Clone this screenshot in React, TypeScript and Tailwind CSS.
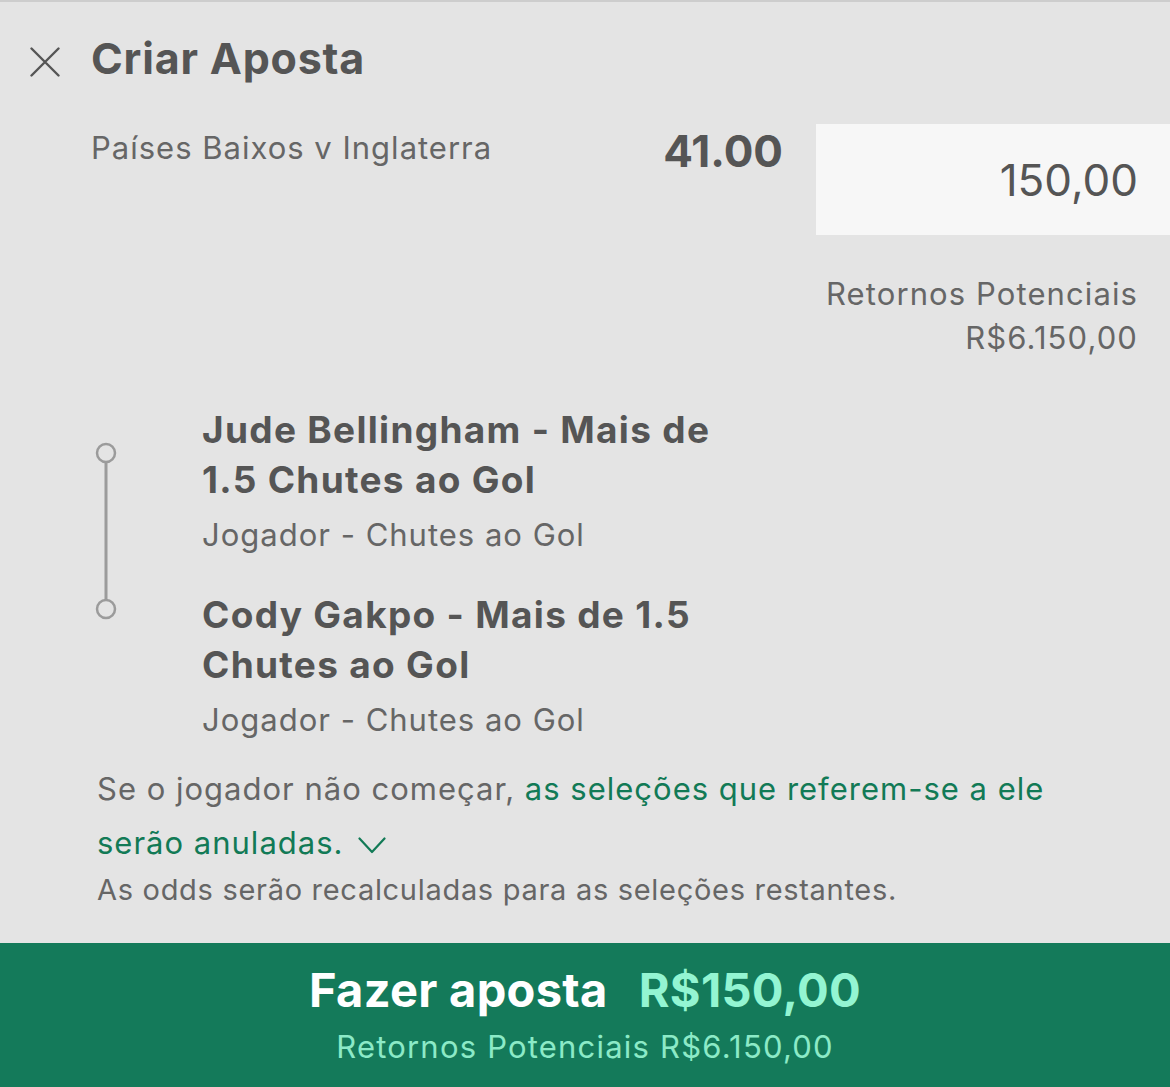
import React from "react";

const legs = [
  {
    title: ["Jude Bellingham - Mais de", "1.5 Chutes ao Gol"],
    market: "Jogador - Chutes ao Gol",
  },
  {
    title: ["Cody Gakpo - Mais de 1.5", "Chutes ao Gol"],
    market: "Jogador - Chutes ao Gol",
  },
];

function CloseIcon() {
  return (
    <svg width="30" height="30" viewBox="0 0 30 30" fill="none">
      <path d="M1.5 1.5 L28.5 28.5 M28.5 1.5 L1.5 28.5" stroke="#555555" strokeWidth="2.4" strokeLinecap="round" />
    </svg>
  );
}

function Connector() {
  return (
    <svg width="22" height="178" viewBox="0 0 22 178" fill="none">
      <line x1="11" y1="20" x2="11" y2="158" stroke="#9b9b9b" strokeWidth="3" />
      <circle cx="11" cy="11" r="9" stroke="#9b9b9b" strokeWidth="2.5" fill="#e4e4e4" />
      <circle cx="11" cy="167" r="9" stroke="#9b9b9b" strokeWidth="2.5" fill="#e4e4e4" />
    </svg>
  );
}

function Chevron() {
  return (
    <svg width="28" height="17" viewBox="0 0 28 17" fill="none" className="inline-block align-baseline">
      <path d="M1.5 1.5 L14 15 L26.5 1.5" stroke="#127a56" strokeWidth="2.2" strokeLinecap="round" strokeLinejoin="round" />
    </svg>
  );
}

export default function App() {
  return (
    <div
      className="w-[1170px] h-[1087px] bg-[#e4e4e4] border-t-2 border-[#cdcdcd] flex flex-col text-[#555555] overflow-hidden"
      style={{ fontFamily: "Inter, 'Noto Sans', sans-serif" }}
    >
      {/* cabeçalho */}
      <div className="flex items-start pt-[30px]">
        <div className="ml-[30px] mt-[15px]">
          <CloseIcon />
        </div>
        <h1 className="ml-[31px] text-[43px] leading-[52px] font-bold tracking-[0.8px]">Criar Aposta</h1>
      </div>

      {/* evento, odd e valor */}
      <div className="flex items-start mt-[40px]">
        <div className="flex-1 flex justify-between pl-[91px] pr-[33px]">
          <div className="mt-[4px] text-[31px] leading-[40px] tracking-[1px] text-[#666666]">Países Baixos v Inglaterra</div>
          <div className="mt-[1px] text-[44px] leading-[52px] font-bold">41.00</div>
        </div>
        <div className="w-[354px] h-[111px] bg-[#f7f7f7] flex items-center justify-end pr-[32px] text-[44px] leading-[52px] text-[#555555]">
          150,00
        </div>
      </div>

      <div className="mt-[37px] pr-[32px] text-right text-[31px] leading-[44px] tracking-[1.1px] text-[#666666]">
        <div>Retornos Potenciais</div>
        <div>R$6.150,00</div>
      </div>

      {/* seleções */}
      <div className="flex mt-[45px]">
        <div className="w-[202px] shrink-0 pl-[95px] pt-[37px]">
          <Connector />
        </div>
        <div className="flex flex-col">
          {legs.map((leg, i) => (
            <div key={i} className={i > 0 ? "mt-[33px]" : ""}>
              <div className="text-[37px] leading-[50px] font-bold tracking-[1.3px]">
                {leg.title.map((l) => (
                  <div key={l}>{l}</div>
                ))}
              </div>
              <div className="mt-[8px] text-[31px] leading-[44px] tracking-[1px] text-[#666666]">{leg.market}</div>
            </div>
          ))}
        </div>
      </div>

      {/* aviso */}
      <div className="mt-[20px] pl-[97px] pr-[20px]">
        <div className="text-[31px] leading-[54px] tracking-[1px] text-[#666666]">
          Se o jogador não começar, <span className="text-[#127a56]">as seleções que referem-se a ele</span>
          <br />
          <span className="text-[#127a56]">serão anuladas.</span>
          <span className="ml-[15px]">
            <Chevron />
          </span>
        </div>
        <div className="text-[29px] leading-[40px] tracking-[0.7px] text-[#666666]">
          As odds serão recalculadas para as seleções restantes.
        </div>
      </div>

      {/* botão */}
      <button className="mt-auto h-[144px] w-full bg-[#147a5a] flex flex-col items-center pt-[19px]">
        <div className="text-[47px] leading-[56px] font-bold tracking-[0.3px] flex">
          <span className="text-white">Fazer aposta</span>
          <span className="ml-[31px] text-[#93f5d2]">R$150,00</span>
        </div>
        <div className="mt-[9px] text-[31px] leading-[40px] tracking-[1.2px] text-[#8ceac7]">
          Retornos Potenciais R$6.150,00
        </div>
      </button>
    </div>
  );
}
